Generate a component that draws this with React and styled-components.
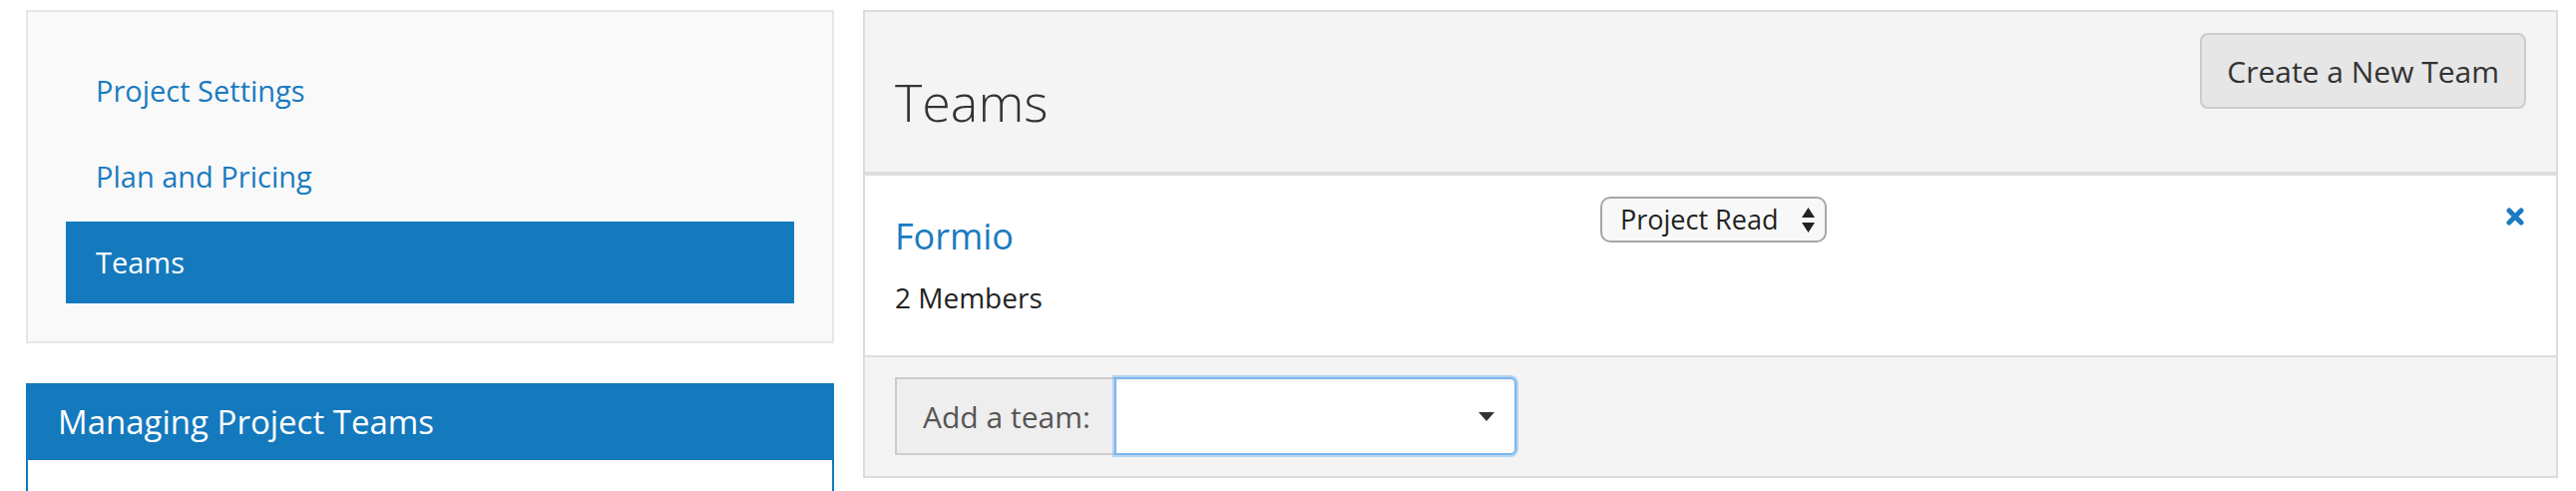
import React from "react";
import styled, { createGlobalStyle } from "styled-components";

const GlobalStyle = createGlobalStyle`
  html, body {
    margin: 0;
    padding: 0;
    background: #fff;
  }
  body {
    font-family: "Open Sans", "Liberation Sans", sans-serif;
    font-size: 28px;
    color: #333;
  }
  * {
    box-sizing: border-box;
  }
`;

const colors = {
  blue: "#1479bd",
  link: "#1a7bc0",
  border: "#dddddd",
  well: "#f9f9f9",
  panelHead: "#f4f4f4",
};

const Page = styled.div`
  display: flex;
  align-items: flex-start;
  gap: 29px;
  padding: 10px 18px 0 26px;
  height: 492px;
  overflow: hidden;
`;

const Sidebar = styled.aside`
  width: 810px;
  flex: none;
`;

const Well = styled.div`
  background: ${colors.well};
  border: 2px solid #e6e6e6;
  padding: 38px;
  margin-bottom: 40px;
`;

const NavList = styled.ul`
  list-style: none;
  margin: 0;
  padding: 0;
  display: flex;
  flex-direction: column;
  gap: 4px;
`;

const NavItem = styled.li`
  padding: 20px 30px;
  line-height: 42px;
  font-size: 29px;
  color: ${(p) => (p.$active ? "#fff" : colors.link)};
  background: ${(p) => (p.$active ? colors.blue : "transparent")};
`;

const InfoPanel = styled.div`
  border: 2px solid ${colors.blue};
`;

const InfoHeading = styled.div`
  background: ${colors.blue};
  color: #fff;
  margin: -2px -2px 0;
  padding: 21px 30px 21px 32px;
  font-size: 33px;
  line-height: 35px;
`;

const InfoBody = styled.div`
  height: 80px;
  background: #fff;
`;

const Main = styled.section`
  flex: 1;
  border: 2px solid ${colors.border};
`;

const Header = styled.div`
  height: 164px;
  background: ${colors.panelHead};
  border-bottom: 4px solid ${colors.border};
  padding: 20px 30px;
  display: flex;
  justify-content: space-between;
  align-items: flex-start;
`;

const Title = styled.h3`
  margin: 41px 0 0;
  font-size: 52px;
  line-height: 57px;
  font-weight: 300;
  color: #333;
`;

const Button = styled.button`
  margin-top: 1px;
  height: 76px;
  padding: 0 25px;
  font-family: inherit;
  font-size: 30px;
  color: #333;
  background: #e6e6e6;
  border: 2px solid #cccccc;
  border-radius: 8px;
`;

const TeamRow = styled.div`
  height: 180px;
  background: #fff;
  padding: 21px 30px;
  display: grid;
  grid-template-columns: 707px 1fr auto;
  align-items: start;
`;

const TeamName = styled.h4`
  margin: 20px 0 21px;
  font-size: 36px;
  line-height: 39.6px;
  font-weight: 400;
  color: ${colors.link};
`;

const Members = styled.div`
  font-size: 28px;
  line-height: 40px;
  color: #222;
`;

const RoleSelect = styled.div`
  width: 227px;
  height: 46px;
  border: 2px solid #a6a6a6;
  border-radius: 10px;
  background: #f8f8f8;
  padding: 0 10px 0 18px;
  display: flex;
  align-items: center;
  justify-content: space-between;
  font-size: 27px;
  line-height: 40px;
  color: #222;
`;

const RemoveIcon = styled.svg`
  width: 18px;
  height: 18px;
  margin: 11px 2px 0 0;
`;

const Footer = styled.div`
  background: ${colors.panelHead};
  border-top: 2px solid ${colors.border};
  padding: 20px 30px 21px;
`;

const InputGroup = styled.div`
  display: flex;
  height: 78px;
`;

const Addon = styled.span`
  display: flex;
  align-items: center;
  padding: 0 24px 0 26px;
  background: #eeeeee;
  border: 2px solid #cccccc;
  border-right: 0;
  font-size: 30px;
  color: #555;
`;

const TeamPicker = styled.div`
  width: 403px;
  background: #fff;
  border: 2px solid #7cb6ee;
  border-radius: 0 6px 6px 0;
  box-shadow: 0 0 0 2px rgba(102, 175, 233, 0.45), inset 0 2px 3px rgba(0, 0, 0, 0.06);
  display: flex;
  align-items: center;
  justify-content: flex-end;
  padding-right: 20px;
`;

const Caret = () => (
  <svg width="16" height="9" viewBox="0 0 16 9">
    <path d="M0 0H16L8 9Z" fill="#333" />
  </svg>
);

const UpDown = () => (
  <svg width="13" height="25" viewBox="0 0 13 25">
    <path d="M6.5 0L13 10H0Z M0 15H13L6.5 25Z" fill="#222" />
  </svg>
);

const navItems = ["Project Settings", "Plan and Pricing", "Teams"];

export default function App() {
  return (
    <>
      <GlobalStyle />
      <Page>
        <Sidebar>
          <Well>
            <NavList>
              {navItems.map((item) => (
                <NavItem key={item} $active={item === "Teams"}>
                  {item}
                </NavItem>
              ))}
            </NavList>
          </Well>
          <InfoPanel>
            <InfoHeading>Managing Project Teams</InfoHeading>
            <InfoBody />
          </InfoPanel>
        </Sidebar>
        <Main>
          <Header>
            <Title>Teams</Title>
            <Button>Create a New Team</Button>
          </Header>
          <TeamRow>
            <div>
              <TeamName>Formio</TeamName>
              <Members>2 Members</Members>
            </div>
            <div>
              <RoleSelect>
                <span>Project Read</span>
                <UpDown />
              </RoleSelect>
            </div>
            <RemoveIcon viewBox="0 0 18 18">
              <path
                d="M3 3L15 15M15 3L3 15"
                stroke={colors.link}
                strokeWidth="5"
                strokeLinecap="round"
              />
            </RemoveIcon>
          </TeamRow>
          <Footer>
            <InputGroup>
              <Addon>Add a team:</Addon>
              <TeamPicker>
                <Caret />
              </TeamPicker>
            </InputGroup>
          </Footer>
        </Main>
      </Page>
    </>
  );
}
